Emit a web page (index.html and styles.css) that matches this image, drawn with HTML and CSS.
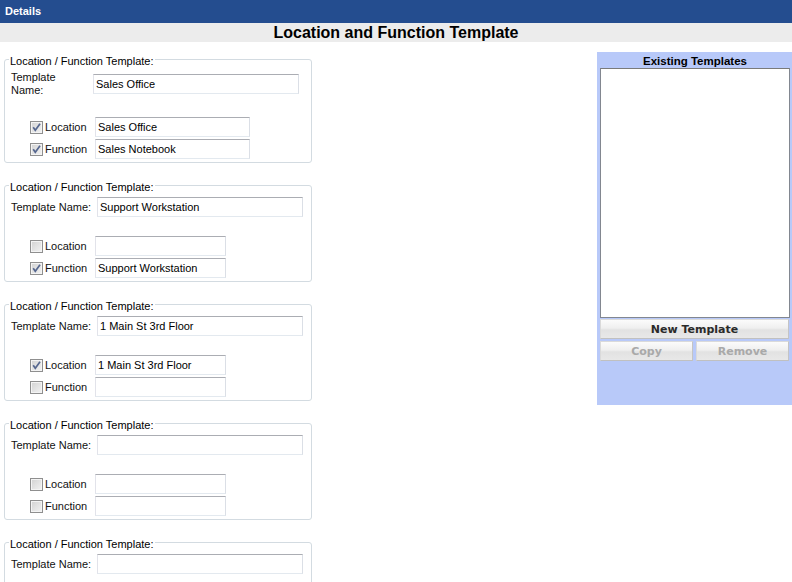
FILE: index.html
```html
<!DOCTYPE html>
<html>
<head>
<meta charset="utf-8">
<title>Location and Function Template</title>
<link rel="stylesheet" href="styles.css">
</head>
<body>
<div class="topbar">Details</div>
<div class="titleband">Location and Function Template</div>
<div class="content">
  <div class="left">
    <fieldset class="tpl tpl-first">
      <legend>Location / Function Template:</legend>
      <div class="name-row"><span class="lbl">Template Name:</span><input class="name-in" type="text" value="Sales Office" readonly></div>
      <div class="opt-row first-opt"><span class="optlbl"><span class="cb"><svg viewBox="0 0 13 13" width="13" height="13"><path d="M3.2 6.2 L5.3 9.3 L10 2.8" fill="none" stroke="#56678f" stroke-width="1.7"/></svg></span>Location</span><input class="opt-in" type="text" value="Sales Office" readonly></div>
      <div class="opt-row"><span class="optlbl"><span class="cb"><svg viewBox="0 0 13 13" width="13" height="13"><path d="M3.2 6.2 L5.3 9.3 L10 2.8" fill="none" stroke="#56678f" stroke-width="1.7"/></svg></span>Function</span><input class="opt-in" type="text" value="Sales Notebook" readonly></div>
    </fieldset>

    <fieldset class="tpl">
      <legend>Location / Function Template:</legend>
      <div class="name-row"><span class="lbl">Template Name:</span><input class="name-in" type="text" value="Support Workstation" readonly></div>
      <div class="opt-row first-opt"><span class="optlbl"><span class="cb"></span>Location</span><input class="opt-in" type="text" value="" readonly></div>
      <div class="opt-row"><span class="optlbl"><span class="cb"><svg viewBox="0 0 13 13" width="13" height="13"><path d="M3.2 6.2 L5.3 9.3 L10 2.8" fill="none" stroke="#56678f" stroke-width="1.7"/></svg></span>Function</span><input class="opt-in" type="text" value="Support Workstation" readonly></div>
    </fieldset>

    <fieldset class="tpl">
      <legend>Location / Function Template:</legend>
      <div class="name-row"><span class="lbl">Template Name:</span><input class="name-in" type="text" value="1 Main St 3rd Floor" readonly></div>
      <div class="opt-row first-opt"><span class="optlbl"><span class="cb"><svg viewBox="0 0 13 13" width="13" height="13"><path d="M3.2 6.2 L5.3 9.3 L10 2.8" fill="none" stroke="#56678f" stroke-width="1.7"/></svg></span>Location</span><input class="opt-in" type="text" value="1 Main St 3rd Floor" readonly></div>
      <div class="opt-row"><span class="optlbl"><span class="cb"></span>Function</span><input class="opt-in" type="text" value="" readonly></div>
    </fieldset>

    <fieldset class="tpl">
      <legend>Location / Function Template:</legend>
      <div class="name-row"><span class="lbl">Template Name:</span><input class="name-in" type="text" value="" readonly></div>
      <div class="opt-row first-opt"><span class="optlbl"><span class="cb"></span>Location</span><input class="opt-in" type="text" value="" readonly></div>
      <div class="opt-row"><span class="optlbl"><span class="cb"></span>Function</span><input class="opt-in" type="text" value="" readonly></div>
    </fieldset>

    <fieldset class="tpl tpl-last">
      <legend>Location / Function Template:</legend>
      <div class="name-row"><span class="lbl">Template Name:</span><input class="name-in" type="text" value="" readonly></div>
    </fieldset>
  </div>

  <div class="panel">
    <div class="panel-title">Existing Templates</div>
    <div class="listbox"></div>
    <div class="btn btn-wide">New Template</div>
    <div class="btn-row">
      <div class="btn btn-half disabled">Copy</div>
      <div class="btn btn-half disabled">Remove</div>
    </div>
  </div>
</div>
</body>
</html>
```

FILE: styles.css
```css
html, body {
  margin: 0;
  padding: 0;
  background: #ffffff;
}
body {
  font-family: "Liberation Sans", Arial, sans-serif;
  font-size: 11px;
  color: #000;
  overflow: hidden;
  height: 582px;
}
.topbar {
  height: 23px;
  line-height: 23px;
  background: #244d8f;
  color: #ffffff;
  font-weight: bold;
  font-size: 11px;
  padding-left: 5px;
}
.titleband {
  height: 19px;
  line-height: 20px;
  background: #ececec;
  text-align: center;
  font-weight: bold;
  font-size: 16px;
  color: #000;
}
.content {
  display: flex;
  align-items: flex-start;
}
.left {
  display: flex;
  flex-direction: column;
  width: 320px;
}
.tpl {
  box-sizing: border-box;
  width: 308px;
  min-width: 0;
  margin: 0 0 13px 4px;
  padding: 3px 6px 3px 6px;
  border: 1px solid #d3dbe1;
  border-radius: 3px;
}
.tpl-first {
  margin-top: 8px;
}
.tpl-last {
  padding-bottom: 40px;
  margin-bottom: 0;
}
.tpl legend {
  padding: 5px 1px 0 1px;
  margin-left: -2px;
  line-height: 13px;
  font-size: 11px;
  color: #000;
}
.name-row {
  display: flex;
  align-items: center;
  min-height: 20px;
}
.lbl {
  width: 86px;
  line-height: 13px;
  color: #111;
}
.tpl-first .name-row {
  min-height: 26px;
}
.tpl-first .lbl {
  width: 52px;
  margin-right: 30px;
}
input {
  box-sizing: border-box;
  height: 20px;
  margin: 0;
  padding: 0 2px;
  font-family: "Liberation Sans", Arial, sans-serif;
  font-size: 11px;
  color: #000;
  background: #fff;
  border: 1px solid;
  border-color: #abadb3 #dbdfe6 #e3e9ef #e2e3ea;
  outline: none;
}
.name-in {
  width: 206px;
}
.opt-row {
  display: flex;
  align-items: center;
  margin-top: 2px;
  padding-left: 19px;
}
.opt-row.first-opt {
  margin-top: 19px;
}
.tpl-first .opt-row.first-opt {
  margin-top: 20px;
}
.optlbl {
  display: flex;
  align-items: center;
  width: 65px;
  color: #111;
}
.cb {
  box-sizing: border-box;
  width: 13px;
  height: 13px;
  margin-right: 2px;
  border: 1px solid #8f8f8f;
  background: linear-gradient(135deg, #d2d2d2 0%, #e6e6e6 60%, #f2f2f2 100%);
  box-shadow: inset 0 0 0 1px #f4f4f4;
  position: relative;
  flex: none;
}
.cb svg {
  position: absolute;
  left: -1px;
  top: -1px;
}
.opt-in {
  width: 131px;
}
.tpl-first .opt-in {
  width: 155px;
}
.panel {
  margin-left: auto;
  margin-top: 10px;
  width: 195px;
  height: 353px;
  background: #b8c9f9;
  box-sizing: border-box;
  padding: 3px 2px 0 3px;
  display: flex;
  flex-direction: column;
}
.panel-title {
  text-align: center;
  font-weight: bold;
  font-size: 11.5px;
  line-height: 13px;
  color: #000;
}
.listbox {
  box-sizing: border-box;
  height: 250px;
  background: #fff;
  border: 1px solid #828790;
  border-top-color: #7a7a7a;
}
.btn {
  box-sizing: border-box;
  height: 20px;
  line-height: 19px;
  text-align: center;
  font-family: "DejaVu Sans", Verdana, sans-serif;
  font-weight: bold;
  font-size: 11px;
  color: #2a2a2a;
  border: 1px solid #dadada;
  border-right-color: #c4c4c4;
  border-bottom-color: #c0c0c0;
  background: linear-gradient(#fbfbfb 0%, #efefef 45%, #e2e2e2 55%, #e8e8e8 100%);
}
.btn-wide {
  margin-top: 1px;
  width: 189px;
}
.btn-row {
  display: flex;
  gap: 3px;
  margin-top: 2px;
}
.btn-half:first-child {
  width: 93px;
}
.btn-half:last-child {
  width: 93px;
}
.disabled {
  color: #a9a9a9;
}
```
